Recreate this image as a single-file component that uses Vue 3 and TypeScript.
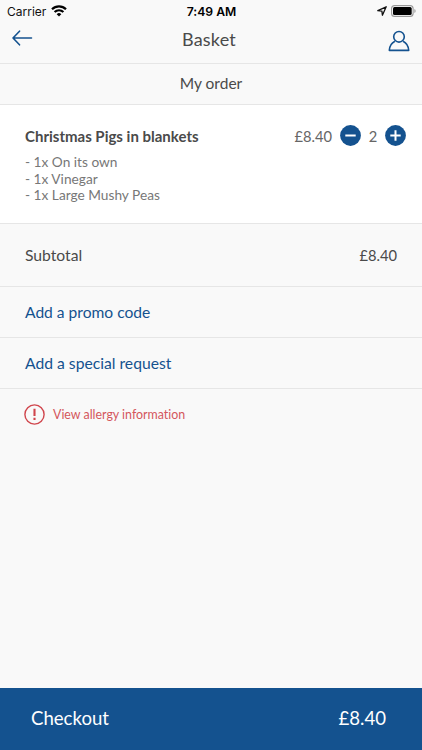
<script setup lang="ts">
import { ref } from 'vue'

interface OrderLine { name: string; price: string; quantity: number; options: string[] }

const line = ref<OrderLine>({
  name: 'Christmas Pigs in blankets',
  price: '£8.40',
  quantity: 2,
  options: ['1x On its own', '1x Vinegar', '1x Large Mushy Peas'],
})
const total = '£8.40'
</script>

<template>
  <main class="screen">
    <header class="top">
      <div class="status">
        <div class="carrier">
          <span>Carrier</span>
          <svg width="16" height="12" viewBox="0 0 16 12" fill="none" stroke="#000" stroke-width="2.2">
            <path d="M1 4.3a10 10 0 0 1 14 0M3.6 7.1a6.2 6.2 0 0 1 8.8 0" />
            <path d="M8 11.6 5.7 9.2a3.3 3.3 0 0 1 4.6 0z" fill="#000" stroke="none" />
          </svg>
        </div>
        <strong>7:49 AM</strong>
        <div class="device">
          <svg width="10" height="10" viewBox="0 0 10 10" fill="none" stroke="#111" stroke-width="1.3" stroke-linejoin="round">
            <path d="M.8 4.6 9.2.8 5.4 9.2 4.9 5.1z" />
          </svg>
          <svg width="25" height="12" viewBox="0 0 25 12">
            <rect x=".6" y=".6" width="21.5" height="10.8" rx="3" fill="#fff" stroke="#999" stroke-width="1.1" />
            <rect x="2" y="2" width="18.7" height="8" rx="1.5" />
            <path d="M23.4 4v4q1.2-.6 1.2-2t-1.2-2z" fill="#999" />
          </svg>
        </div>
      </div>
      <nav class="nav">
        <svg class="back" width="21" height="16" viewBox="0 0 21 16" fill="none" stroke="#14528f" stroke-width="1.6" stroke-linecap="round" stroke-linejoin="round">
          <path d="M19.5 8H1M7.5 1.2 1 8l6.5 6.8" />
        </svg>
        <h1>Basket</h1>
        <svg class="profile" width="22" height="22" viewBox="0 0 22 22" fill="none" stroke="#14528f" stroke-width="1.6" stroke-linejoin="round">
          <circle cx="11" cy="6.8" r="5.3" />
          <path d="M6.9 11.3C3.4 13.1 1.6 16.1 1.3 20.4h19.4c-.3-4.3-2.1-7.3-5.6-9.1" />
        </svg>
      </nav>
    </header>
    <h2 class="section">My order</h2>
    <section class="item">
      <div class="item-head">
        <h3>{{ line.name }}</h3>
        <div class="controls">
          <span class="price">{{ line.price }}</span>
          <button aria-label="Remove one"><svg width="21" height="21" viewBox="0 0 21 21"><circle cx="10.5" cy="10.5" r="10.4" fill="#14528f" /><path d="M5.3 10.5h10.4" stroke="#fff" stroke-width="2" /></svg></button>
          <span class="qty">{{ line.quantity }}</span>
          <button aria-label="Add one"><svg width="21" height="21" viewBox="0 0 21 21"><circle cx="10.5" cy="10.5" r="10.4" fill="#14528f" /><path d="M5.3 10.5h10.4M10.5 5.3v10.4" stroke="#fff" stroke-width="2" /></svg></button>
        </div>
      </div>
      <ul><li v-for="o in line.options" :key="o">- {{ o }}</li></ul>
    </section>
    <section class="subtotal"><span>Subtotal</span><span class="price">{{ total }}</span></section>
    <a class="action promo">Add a promo code</a>
    <a class="action request">Add a special request</a>
    <a class="allergy">
      <svg width="21" height="21" viewBox="0 0 21 21" fill="none" stroke="#d0454c"><circle cx="10.5" cy="10.5" r="9.6" stroke-width="1.4" /><path d="M10.5 4.8v7.3M10.5 13.8v2.3" stroke-width="2.1" /></svg>
      <span>View allergy information</span>
    </a>
    <footer class="checkout"><span>Checkout</span><span class="total">{{ total }}</span></footer>
  </main>
</template>

<style>
body { background: #f9f9f9; }
</style>

<style scoped>
* { box-sizing: border-box; margin: 0; padding: 0; }
.screen { display: flex; flex-direction: column; width: 422px; height: 750px; background: #f9f9f9; color: #4a4a4a; font-family: Lato, sans-serif; font-size: 15.7px; font-variant-ligatures: none; white-space: nowrap; }
svg { display: block; flex: none; }
.top { height: 64px; border-bottom: 1px solid #e6e6e6; }
.status { height: 22px; display: grid; grid-template-columns: 1fr auto 1fr; align-items: center; padding: 0 6px 0 7px; font-family: Inter, sans-serif; font-size: 12px; color: #111; }
.status strong { font-size: 12.2px; font-weight: 600; color: #000; }
.carrier, .device { display: flex; align-items: center; gap: 5px; }
.device { justify-content: flex-end; gap: 4px; }
.nav { height: 38px; display: grid; grid-template-columns: 1fr auto 1fr; align-items: center; padding: 0 12px 2px; }
.back { margin-bottom: 4px; }
.profile { justify-self: end; margin-top: 1px; }
h1 { font-size: 18px; font-weight: 400; letter-spacing: .2px; padding-right: 4px; margin-bottom: 3px; }
.section { height: 41px; display: flex; align-items: center; justify-content: center; padding-bottom: 2px; border-bottom: 1px solid #e6e6e6; font-size: 15.5px; font-weight: 400; }
.item { height: 119px; background: #fff; padding: 20px 16px 0 25px; border-bottom: 1px solid #e6e6e6; }
.item-head, .controls { display: flex; align-items: center; }
.item-head { justify-content: space-between; }
h3 { font-size: 15px; }
.price { font-size: 14.7px; }
.controls .price { margin-right: 8px; color: #666; }
.qty { width: 24px; text-align: center; font-size: 14.7px; color: #666; }
button { border: 0; background: none; }
ul { list-style: none; margin-top: 8px; color: #777; font-size: 13.7px; line-height: 16.5px; }
.subtotal { height: 63px; display: flex; align-items: center; justify-content: space-between; padding: 0 25px 1px; border-bottom: 1px solid #e6e6e6; }
.action { height: 51px; display: flex; align-items: center; padding: 0 25px 1px; border-bottom: 1px solid #e6e6e6; color: #14528f; }
.promo { font-size: 15.6px; }
.allergy { display: flex; align-items: center; gap: 8px; padding: 15px 24px; color: #d4565c; font-size: 12.4px; }
.checkout { height: 62px; margin-top: auto; display: flex; align-items: center; justify-content: space-between; padding: 0 36px 2px 31px; background: #14528f; color: #fff; font-size: 18.6px; }
</style>
